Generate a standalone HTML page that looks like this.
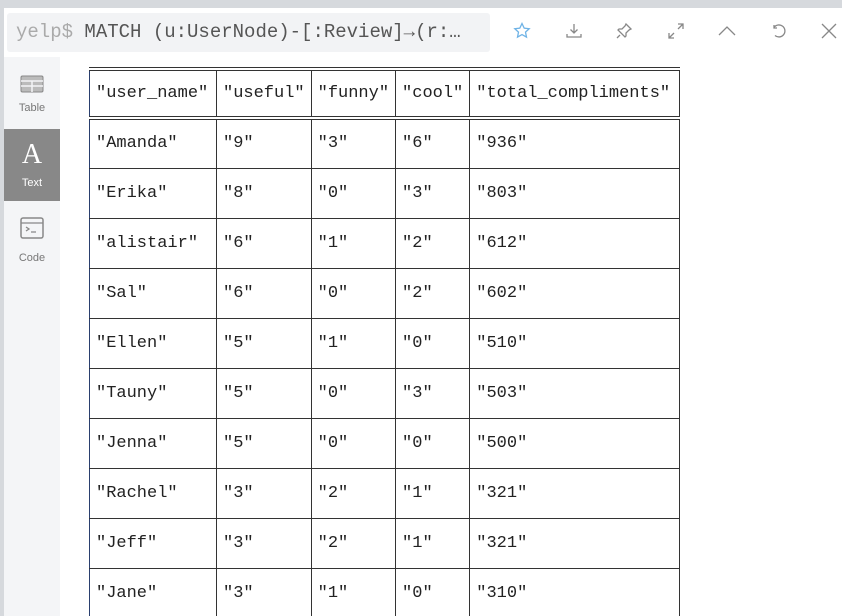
<!DOCTYPE html>
<html><head><meta charset="utf-8"><style>
*{margin:0;padding:0;box-sizing:border-box}
html,body{width:842px;height:616px;overflow:hidden}
body{background:#d6d9dd;font-family:"Liberation Sans",sans-serif;position:relative}
.card{position:absolute;left:4px;top:8px;width:838px;height:608px;background:#fff}
.q{position:absolute;left:7px;top:13px;width:483px;height:39px;background:#f2f3f5;border-radius:3px;font-family:"Liberation Mono",monospace;font-size:19px;color:#555;line-height:39px;padding-left:9px;white-space:nowrap;overflow:hidden}
.q span{color:#aaa}
.side{position:absolute;left:4px;top:57px;width:56px;height:559px;background:#f4f5f7}
.tab{position:absolute;left:0;width:56px;height:72px;text-align:center;font-size:11px;color:#777}
.tab.act{background:#888;color:#fff}
.icons{position:absolute;top:22px;left:0;width:842px;height:20px}
.icons svg{position:absolute;top:0}
.tw{position:absolute;left:89px;top:67px;height:549px;overflow:hidden}
table{border-collapse:collapse;font-family:"Liberation Mono",monospace;font-size:17px;color:#222}
td{height:50px;padding:0 6px;border:1px solid #333;border-left-color:#2a3f6e;white-space:nowrap}
td:nth-child(3),td:nth-child(4){border-left-color:#5a2a2a}
tr.h td{height:49px;border-top:4px double #333;border-bottom:4px double #333}
</style></head><body>
<div class="card"></div>
<div class="q"><span>yelp$</span> MATCH (u:UserNode)-[:Review]→(r:…</div>
<div class="icons">
<svg style="left:513px" width="18" height="18" viewBox="0 0 18 18"><path d="M9 1.5l2.2 4.6 5 .6-3.7 3.4 1 5-4.5-2.5-4.5 2.5 1-5L1.8 6.7l5-.6z" fill="none" stroke="#6fb3e6" stroke-width="1.3"/></svg>
<svg style="left:565px" width="18" height="18" viewBox="0 0 18 18"><path d="M9 2v9M5.5 7.5L9 11l3.5-3.5M2 12v3h14v-3" fill="none" stroke="#888" stroke-width="1.3"/></svg>
<svg style="left:615px" width="18" height="18" viewBox="0 0 18 18"><path d="M11 2l5 5-2 1-3 3 0 3-1 1-7-7 1-1h3l3-3zM5 13l-3 3" fill="none" stroke="#888" stroke-width="1.3"/></svg>
<svg style="left:667px" width="18" height="18" viewBox="0 0 18 18"><path d="M11 2h5v5M16 2l-5 5M7 16H2v-5M2 16l5-5" fill="none" stroke="#888" stroke-width="1.3"/></svg>
<svg style="left:717px" width="20" height="18" viewBox="0 0 20 18"><path d="M2 13l8-8 8 8" fill="none" stroke="#888" stroke-width="1.3"/></svg>
<svg style="left:770px" width="18" height="18" viewBox="0 0 18 18"><path d="M5 13.5a6 6 0 1 0-1-8M4 3v3h3" fill="none" stroke="#888" stroke-width="1.3"/></svg>
<svg style="left:820px" width="18" height="18" viewBox="0 0 18 18"><path d="M2 2l14 14M16 2L2 16" fill="none" stroke="#888" stroke-width="1.3"/></svg>
</div>
<div class="side">
<div class="tab" style="top:0"><svg style="margin-top:18px" width="24" height="18" viewBox="0 0 24 18"><rect x="1" y="1" width="22" height="16" rx="1.5" fill="#bbb" stroke="#888"/><path d="M1 6h22M1 11h22M12 6v11" stroke="#f4f5f7" stroke-width="1.5"/></svg><div style="margin-top:6px">Table</div></div>
<div class="tab act" style="top:72px"><div style="font-family:'Liberation Serif',serif;font-size:28px;line-height:28px;margin-top:12px">A</div><div style="margin-top:8px">Text</div></div>
<div class="tab" style="top:144px"><svg style="margin-top:16px" width="24" height="22" viewBox="0 0 24 22"><rect x="1" y="1" width="22" height="20" rx="2" fill="none" stroke="#888" stroke-width="1.5"/><path d="M1 6h22M6 10l3 2-3 2M11 15h5" fill="none" stroke="#888" stroke-width="1.3"/></svg><div style="margin-top:10px">Code</div></div>
</div>
<div class="tw"><table>
<tr class="h"><td style="width:127px">"user_name"</td><td style="width:93px">"useful"</td><td style="width:83px">"funny"</td><td style="width:72px">"cool"</td><td style="width:210px">"total_compliments"</td></tr>
<tr><td>"Amanda"</td><td>"9"</td><td>"3"</td><td>"6"</td><td>"936"</td></tr>
<tr><td>"Erika"</td><td>"8"</td><td>"0"</td><td>"3"</td><td>"803"</td></tr>
<tr><td>"alistair"</td><td>"6"</td><td>"1"</td><td>"2"</td><td>"612"</td></tr>
<tr><td>"Sal"</td><td>"6"</td><td>"0"</td><td>"2"</td><td>"602"</td></tr>
<tr><td>"Ellen"</td><td>"5"</td><td>"1"</td><td>"0"</td><td>"510"</td></tr>
<tr><td>"Tauny"</td><td>"5"</td><td>"0"</td><td>"3"</td><td>"503"</td></tr>
<tr><td>"Jenna"</td><td>"5"</td><td>"0"</td><td>"0"</td><td>"500"</td></tr>
<tr><td>"Rachel"</td><td>"3"</td><td>"2"</td><td>"1"</td><td>"321"</td></tr>
<tr><td>"Jeff"</td><td>"3"</td><td>"2"</td><td>"1"</td><td>"321"</td></tr>
<tr><td>"Jane"</td><td>"3"</td><td>"1"</td><td>"0"</td><td>"310"</td></tr>
</table></div>
</body></html>
